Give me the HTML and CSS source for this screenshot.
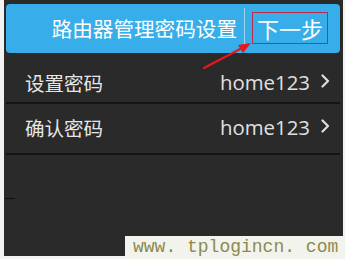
FILE: index.html
```html
<!DOCTYPE html>
<html lang="zh">
<head>
<meta charset="utf-8">
<link rel="stylesheet" href="styles.css">
</head>
<body>
<div class="panel">
  <div class="header">
    <span class="title">路由器管理密码设置</span>
    <span class="divider"></span>
    <span class="next">下一步</span>
  </div>
  <div class="row row-first">
    <span class="label">设置密码</span>
    <span class="value">home123<svg class="chev" width="9" height="14" viewBox="0 0 9 14"><polyline points="1.5,1.5 7,7 1.5,12.5" fill="none" stroke="#dedede" stroke-width="2.2" stroke-linecap="round" stroke-linejoin="round"/></svg></span>
  </div>
  <div class="row row-second">
    <span class="label">确认密码</span>
    <span class="value">home123<svg class="chev" width="9" height="14" viewBox="0 0 9 14"><polyline points="1.5,1.5 7,7 1.5,12.5" fill="none" stroke="#dedede" stroke-width="2.2" stroke-linecap="round" stroke-linejoin="round"/></svg></span>
  </div>
  <div class="tick"></div>
  <svg class="arrow" width="345" height="80" viewBox="0 0 345 80">
    <line x1="204" y1="68" x2="244" y2="47" stroke="#e8161b" stroke-width="2.2" stroke-linecap="round"/>
    <polygon points="251,43 238,45 243,53" fill="#e8161b"/>
  </svg>
</div>
<div class="watermark">www. tplogincn. com</div>
</body>
</html>
```
FILE: styles.css
```css
html, body {
  margin: 0;
  padding: 0;
}
body {
  width: 345px;
  height: 259px;
  background: #f2f2f2;
  position: relative;
  overflow: hidden;
  font-family: "Noto Sans CJK SC", "Open Sans", sans-serif;
}
.panel {
  position: relative;
  margin-left: 4px;
  width: 339px;
  height: 256px;
  background: #2a2a2a;
  padding: 4px 3px 0 2px;
  box-sizing: border-box;
}
.header {
  height: 49px;
  background: #37aeea;
  border-radius: 4px;
  display: flex;
  align-items: center;
  justify-content: flex-end;
  padding-right: 17px;
  color: #fff;
}
.title {
  font-size: 20.6px;
  line-height: 1;
  margin-top: -1px;
}
.divider {
  width: 1px;
  height: 38px;
  background: #9fd6f2;
  margin: 4px 12px 0 7px;
  align-self: flex-start;
}
.next {
  font-size: 22px;
  line-height: 1;
  margin-top: -1px;
  outline: 1.5px solid #c0284a;
  outline-offset: 4px;
}
.row {
  height: 49px;
  border-bottom: 2px solid #141414;
  display: flex;
  align-items: center;
  justify-content: space-between;
  padding: 0 10px 0 19px;
  color: #e6e6e6;
}
.row-first {
  padding-top: 10px;
  height: 39px;
}
.row-second {
  padding-bottom: 2px;
  height: 47px;
}
.label {
  font-size: 19.5px;
  line-height: 1;
}
.value {
  font-family: "Open Sans", sans-serif;
  font-size: 20.4px;
  line-height: 1;
  color: #e0e0e0;
  display: flex;
  align-items: center;
}
.chev {
  margin-left: 11px;
  margin-top: -4px;
  display: block;
}
.tick {
  position: absolute;
  left: 1px;
  top: 198px;
  width: 10px;
  height: 1px;
  background: #0e0e0e;
}
.arrow {
  position: absolute;
  left: -4px;
  top: 0;
  pointer-events: none;
}
.watermark {
  position: absolute;
  left: 125px;
  top: 236px;
  width: 220px;
  height: 23px;
  background: #f3f3ee;
  color: #8c8a4c;
  font-family: "Liberation Mono", monospace;
  font-size: 18px;
  line-height: 23px;
  padding-left: 8px;
  box-sizing: border-box;
  white-space: nowrap;
}
```
